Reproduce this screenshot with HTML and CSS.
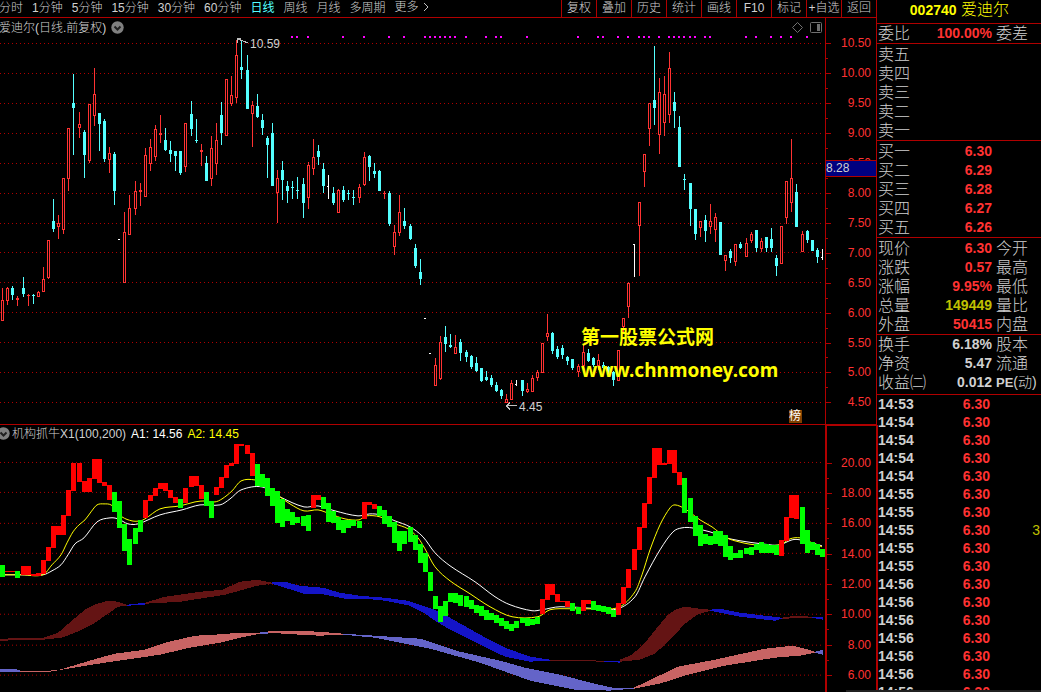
FILE: index.html
```html
<!DOCTYPE html>
<html lang="zh-CN">
<head>
<meta charset="utf-8">
<title>爱迪尔 002740</title>
<link rel="stylesheet" href="styles.css">
</head>
<body>
<div class="app">
  <main class="main">
    <nav class="toolbar">
      <div class="periods">
        <button>分时</button><button>1分钟</button><button>5分钟</button><button>15分钟</button><button>30分钟</button><button>60分钟</button><button class="active">日线</button><button>周线</button><button>月线</button><button>多周期</button><button class="more">更多<svg class="chevron" width="6" height="10" viewBox="0 0 6 10"><path d="M1 1L5 5L1 9"/></svg></button>
      </div>
      <div class="actions">
        <button>复权</button><button>叠加</button><button>历史</button><button>统计</button><button>画线</button><button>F10</button><button>标记</button><button>+自选</button><button>返回</button>
      </div>
    </nav>

    <section class="panel panel-price">
      <div class="plot">
        <header class="plot-head">
          <span class="name">爱迪尔(日线.前复权)</span>
          <svg class="drop" width="13" height="13" viewBox="0 0 13 13"><circle cx="6.5" cy="6.5" r="6.2"/><path d="M3.5 5.5L6.5 8.5L9.5 5.5"/></svg>
          <svg class="tools" width="32" height="13" viewBox="0 0 32 13"><path d="M6.5 1.5L11.5 6.5L6.5 11.5L1.5 6.5Z"/><rect x="19.500" y="1.500" width="11" height="10" rx="1"/><rect class="solid" x="26" y="3" width="3" height="7"/></svg>
        </header>
        <svg class="canvas" id="price" viewBox="0 35 825 389" preserveAspectRatio="none"></svg>
        <div class="watermark"><p>第一股票公式网</p><p class="url">www.chnmoney.com</p></div>
        <span class="badge">榜</span>
      </div>
      <div class="axis">
        <ol class="scale"><li>10.50</li><li>10.00</li><li>9.50</li><li>9.00</li><li>8.50</li><li>8.00</li><li>7.50</li><li>7.00</li><li>6.50</li><li>6.00</li><li>5.50</li><li>5.00</li><li>4.50</li></ol>
        <span class="cursor">8.28</span>
      </div>
    </section>

    <section class="panel panel-ind">
      <div class="plot">
        <header class="plot-head">
          <svg class="drop drop-first" width="13" height="13" viewBox="0 0 13 13"><circle cx="6.5" cy="6.5" r="6.2"/><path d="M3.5 5.5L6.5 8.5L9.5 5.5"/></svg>
          <span>机构抓牛X1(100,200)</span><span class="a1">A1: 14.56</span><span class="a2">A2: 14.45</span>
        </header>
        <svg class="canvas" id="ind" viewBox="0 442 825 250" preserveAspectRatio="none"></svg>
      </div>
      <div class="axis">
        <ol class="scale"><li>20.00</li><li>18.00</li><li>16.00</li><li>14.00</li><li>12.00</li><li>10.00</li><li>8.00</li><li>6.00</li></ol>
      </div>
    </section>
  </main>

  <aside class="side">
    <h1><b>002740</b> 爱迪尔</h1>
    <table class="quote tight"><tr><th>委比</th><td class="up">100.00%</td><th>委差</th></tr></table>
    <table class="quote">
      <tr><th>卖五</th><td></td><th></th></tr><tr><th>卖四</th><td></td><th></th></tr><tr><th>卖三</th><td></td><th></th></tr><tr><th>卖二</th><td></td><th></th></tr><tr><th>卖一</th><td></td><th></th></tr>
    </table>
    <table class="quote">
      <tr><th>买一</th><td class="up">6.30</td><th></th></tr><tr><th>买二</th><td class="up">6.29</td><th></th></tr><tr><th>买三</th><td class="up">6.28</td><th></th></tr><tr><th>买四</th><td class="up">6.27</td><th></th></tr><tr><th>买五</th><td class="up">6.26</td><th></th></tr>
    </table>
    <table class="quote">
      <tr><th>现价</th><td class="up">6.30</td><th>今开</th></tr><tr><th>涨跌</th><td class="up">0.57</td><th>最高</th></tr><tr><th>涨幅</th><td class="up">9.95%</td><th>最低</th></tr><tr><th>总量</th><td class="vol">149449</td><th>量比</th></tr><tr><th>外盘</th><td class="up">50415</td><th>内盘</th></tr>
    </table>
    <table class="quote loose">
      <tr><th>换手</th><td>6.18%</td><th>股本</th></tr><tr><th>净资</th><td>5.47</td><th>流通</th></tr><tr><th>收益㈡</th><td>0.012</td><th class="pe"><b>PE</b>(动)</th></tr>
    </table>
    <table class="ticks" id="ticks"></table>
  </aside>
  <div class="edge"></div>
</div>
<script src="chart.js"></script>
</body>
</html>
```
FILE: styles.css
```css
* { box-sizing: border-box; }
body {
  margin: 0;
  background: #000;
  color: #d0d0d0;
  font: 300 12px/16px "Liberation Sans", "Noto Sans CJK SC", sans-serif;
}
button {
  padding: 0;
  border: 0;
  background: none;
  color: inherit;
  font: inherit;
  white-space: nowrap;
}
.app {
  position: relative;
  display: flex;
  height: 100vh;
  overflow: hidden;
}
.main {
  flex: 1;
  min-width: 0;
  display: flex;
  flex-direction: column;
}
.toolbar {
  display: flex;
  justify-content: space-between;
  height: 18px;
  border-bottom: 1px solid #b00000;
}
.periods { display: flex; gap: 9px; height: 14px; margin-left: -1px; }
.periods .active { color: #54ffff; font-weight: 400; }
.more { display: flex; align-items: center; gap: 4px; }
.chevron { fill: none; stroke: #c0c0c0; }
.actions { display: flex; }
.actions button { width: 35px; padding-bottom: 3px; border-left: 1px solid #b00000; }

.panel { display: flex; min-height: 0; }
.panel-price { flex: 407 1 0; border-bottom: 1px solid #b00000; }
.panel-ind { flex: 267 1 0; }
.plot {
  position: relative;
  flex: 1;
  min-width: 0;
  display: flex;
  flex-direction: column;
}
.plot-head {
  display: flex;
  align-items: center;
  gap: 5px;
  height: 17px;
  white-space: nowrap;
}
.panel-price .plot-head { padding-top: 2px; }
.name { margin-left: -1px; }
.drop circle { fill: #808080; }
.drop path { fill: none; stroke: #202020; stroke-width: 2; }
.drop-first { margin-left: -3px; margin-right: -3px; }
.tools { margin-left: auto; margin-right: 2px; fill: none; stroke: #707070; }
.tools .solid { fill: #707070; stroke: none; }
.a1 { color: #fff; }
.a2 { color: #ff0; }
.canvas {
  display: block;
  flex: 1;
  width: 100%;
  min-height: 0;
  shape-rendering: crispEdges;
}
.canvas text { fill: #d0d0d0; font-size: 12px; }
.grid { stroke: #b00000; stroke-dasharray: 1 3; }
.up-line { fill: #ff3232; }
.up-body { fill: #000; stroke: #ff3232; }
.down { fill: #54ffff; }
.flat { fill: #fff; }
.signal { fill: #f0f; }
.pointer { fill: none; stroke: #c0c0c0; }
.bull { fill: #f00; }
.bear { fill: #0f0; }
.line-a1 { fill: none; stroke: #fff; }
.line-a2 { fill: none; stroke: #ff0; }
.maroon { fill: #641414; }
.blue { fill: #1414c8; }
.pink { fill: #c86464; }
.lilac { fill: #6464c8; }

.watermark {
  position: absolute;
  left: 581px;
  top: 303px;
  color: #ff0;
  font: 700 19px/30px "Noto Sans CJK SC", sans-serif;
}
.watermark p { margin: 0; }
.watermark .url { font: 700 19px/38px "Noto Sans", sans-serif; }
.badge {
  position: absolute;
  right: 23px;
  bottom: 1px;
  width: 13px;
  height: 13px;
  background: #804000;
  color: #fff;
  font-weight: 400;
  line-height: 13px;
}
.axis {
  position: relative;
  width: 51px;
  border-left: 1px solid #b00000;
  color: #ff3232;
}
.panel-ind .axis { border: 2px solid #b00000; border-top-width: 1px; border-bottom: 0; width: 53px; margin-right: -2px; z-index: 1; }
.scale {
  display: grid;
  grid-auto-rows: 1fr;
  height: 100%;
  margin: 0;
  padding: 10px 0 7px;
  list-style: none;
  text-align: right;
}
.panel-ind .scale { padding: 21px 0 2px; }
.scale li {
  position: relative;
  display: flex;
  align-items: center;
  justify-content: flex-end;
  padding-right: 5px;
}
.scale li::before, .scale li::after {
  content: "";
  position: absolute;
  left: 0;
  top: 50%;
  width: 5px;
  height: 1px;
  background: #b00000;
}
.scale li::after { top: 100%; width: 2px; }
.scale li:last-child::after { display: none; }
.cursor {
  position: absolute;
  left: 0;
  right: 0;
  top: 142px;
  height: 17px;
  border: solid #b00000;
  border-width: 1px 0;
  background: #000080;
  color: #d0d0d0;
  line-height: 14px;
}

.side {
  width: 165px;
  border-left: 1px solid #b00000;
  overflow: hidden;
}
.side h1 {
  height: 24px;
  margin: 0;
  padding-right: 32px;
  border-bottom: 1px solid #b00000;
  color: #ff0;
  font-size: 16px;
  font-weight: 300;
  line-height: 20px;
  text-align: right;
}
.side b { font-size: 14px; font-weight: 700; }
.quote {
  width: 100%;
  table-layout: fixed;
  border-spacing: 0;
  border-collapse: separate;
  padding: 1px 0 0;
  border-bottom: 1px solid #b00000;
}
.quote.tight { padding: 0; }
.quote.loose { padding: 0 0 2px; }
.quote th, .quote td, .ticks td { height: 19px; padding: 0; white-space: nowrap; }
.quote th {
  width: 49px;
  padding-left: 1px;
  font-size: 16px;
  font-weight: 300;
  line-height: 19px;
  text-align: left;
}
.quote th:last-child { padding-left: 4px; }
.quote .pe { font-size: 14px; }
.quote .pe b { font-size: 13px; }
.quote td { width: 66px; text-align: right; font: 700 14px/19px "Liberation Sans", sans-serif; }
.up { color: #ff3232; }
.vol { color: #c0c000; }
.ticks { width: 100%; table-layout: fixed; border-spacing: 0; }
.ticks td { height: 18px; padding-left: 1px; font: 700 14px/18px "Liberation Sans", sans-serif; }
.ticks .up { text-align: right; width: 60px; }
.ticks .time { width: 53px; }
.ticks .lot { color: #c0c000; font-weight: 400; text-align: right; padding-right: 1px; }
.edge {
  position: absolute;
  right: 0;
  bottom: 0;
  width: 195px;
  height: 2px;
  background: #202020;
  z-index: 2;
}
```
FILE: chart.js
```js
// Each candle: kind (r rising, c falling, w flat), high, open/close top, open/close bottom, low.
const candles = `r288,300,321,321 r287,288,301,305 c286,288,295,300 r296,298,300,306 c277,288,294,297 r294,295,296,306 c294,295,296,304 r291,292,297,297 r267,279,292,292 r240,240,278,279
c199,221,229,232 r215,223,227,239 r178,178,230,234 r128,128,179,191 c74,103,108,155 r112,124,128,138 c130,132,155,178 r104,104,161,163 r68,94,116,126 c113,113,124,151
c119,121,159,162 r147,153,160,173 c152,154,191,205 w239,239,240,240 r212,232,283,283 r195,208,235,235 r181,191,209,215 r183,190,192,206 r148,155,197,197 r139,147,164,171
r125,129,157,161 r115,133,135,143 c128,140,150,151 c141,150,154,162 c151,151,156,171 c151,151,173,175 r123,123,167,172 c101,114,129,136 c119,140,141,143 r144,150,152,166
c156,163,181,181 r136,148,179,186 r123,140,164,175 c102,115,133,145 r79,79,136,136 r76,95,104,106 r40,55,98,103 c41,67,70,79 c55,70,109,109 r101,105,114,147
c94,106,117,118 c114,120,128,135 c136,138,145,178 c123,133,186,186 r170,178,193,223 c161,170,180,200 c181,186,191,203 c181,187,188,199 c177,190,191,199 c178,184,203,218
r162,165,198,209 r139,157,169,175 c145,151,157,165 c163,169,186,193 w175,186,187,199 c187,193,203,205 r189,190,213,213 c186,190,200,202 c190,193,194,200 c190,197,198,205
r184,187,198,203 r152,157,185,186 c155,156,167,181 c163,171,174,178 c170,171,191,191 r191,193,194,199 c191,193,224,226 r225,232,247,255 r195,212,233,236 c208,221,226,229
c224,226,239,240 c244,248,266,268 c259,272,279,285 w318,318,319,319 w353,353,354,354 r358,365,386,386 r336,342,379,380 c326,337,344,352 c334,345,347,348 r335,347,354,354
c339,342,353,361 c350,352,357,362 c355,356,367,369 c357,363,371,372 c368,368,381,382 c371,377,380,381 c375,378,385,387 c382,385,391,392 c389,390,396,399 r394,399,403,403
r380,383,400,400 w380,384,385,386 c380,380,391,396 r383,389,392,393 r375,378,392,392 r370,372,378,381 r343,343,373,373 r314,333,337,341 c332,333,351,354 c346,349,357,359
c345,348,355,359 c356,357,361,365 c359,359,368,370 r364,366,372,377 r345,352,366,367 c349,353,361,362 c357,358,365,367 r354,360,366,370 c362,365,368,369 c366,367,373,374
c371,372,380,386 r350,350,381,381 r318,318,327,334 r282,283,307,318 w244,244,245,277 r202,202,226,276 r154,154,172,187 r103,103,129,146 c46,100,108,125 r78,92,135,154
r76,94,123,136 r52,68,115,123 c92,102,111,128 c116,127,167,167 c174,179,180,190 c183,183,209,226 c209,209,234,240 r221,221,228,237 c215,220,231,242 r204,221,227,234
r213,217,230,242 c222,222,255,255 r255,255,261,271 c249,251,258,263 r244,244,262,266 c242,244,248,249 r238,243,257,257 r232,234,241,243 c230,230,248,252 r238,241,249,252
c237,237,248,252 c228,239,248,252 c255,258,266,276 r226,226,264,264 r181,181,218,224 r139,178,203,212 c184,192,227,227 r231,234,252,252 c230,231,240,243 c240,240,251,251
c248,250,257,263 w249,257,258,260`.split(/\s+/);

// Indicator bars: colour (r/g), top, bottom.
const bars = `g565,577 r571,572 r571,572 g571,578 r566,575 r566,575 r574,576 r573,576 r560,574 r547,561
r526,548 r526,535 r515,535 r490,516 r463,491 r463,482 r481,492 r478,492 r459,479 r459,483
r482,486 r485,500 g492,512 g501,528 g524,551 g539,565 g528,544 g520,532 r500,518 r495,501
r488,496 r483,489 r483,491 r490,498 r497,503 g499,508 r488,503 r476,487 r476,486 r485,499
g492,506 g501,518 r487,495 r477,488 r465,478 r463,466 r444,464 r444,446 r445,454 r453,476
g464,486 g474,487 g478,496 g488,506 g491,523 g499,527 g509,521 g512,525 g517,523 g516,526
g515,531 r495,508 r495,500 g497,509 g503,522 g511,523 g517,530 g520,533 g520,528 g520,526
g521,528 r502,519 r502,505 r504,509 g506,516 g510,524 g516,527 g522,543 g531,551 g531,544
g527,542 g535,550 g544,563 g553,572 g572,591 g596,609 g606,622 g601,616 g593,602 g593,603
g595,606 g596,607 g600,609 g605,613 g606,616 g610,620 g613,620 g615,623 g618,626 g621,629
g624,631 g621,628 g618,623 g618,626 g619,625 g617,624 r599,614 r584,600 r584,595 r594,602
r601,602 r601,607 g603,611 g607,614 r600,611 r600,604 g601,610 g605,611 g606,612 g607,614
g610,617 r603,615 r587,604 r569,588 r549,570 r527,550 r503,528 r477,504 r448,478 r448,465
r463,465 r450,464 r450,473 r472,485 g478,513 g498,522 g516,536 g525,546 g534,544 g536,545
g531,544 g531,546 g535,557 g546,560 g553,558 g550,558 g548,554 g547,555 g544,550 g542,553
g544,553 g545,553 g545,555 r540,556 r517,541 r495,518 r495,519 g507,544 g530,553 g542,550
g544,555 g549,557`.split(/\s+/);

const signals = [292,297,308,343,364,389,404,425,430,435,440,445,450,455,466,486,496,501,527,578,598,603,618,628,639,644,649,659,669,674,679,684,690,695,705,710,746,756,771,781,791,807];

const a2 = "0,575 22,575 43,575 52,565 61,555 67,543 73,532 79,525 85,520 91,512 97,505 104,504 111,505 117,511 122,517 132,521 140,521 145,519 160,509 180,506 195,502 205,501 215,502 222,499 232,491 241,481 255,480 262,484 280,497 290,504 304,511 318,510 330,514 345,519 359,520 366,516 380,517 395,524 408,529 418,538 425,549 435,567 450,581 470,594 490,607 512,617 538,617 550,610 570,609 600,609 620,607 635,592 642,575 650,550 660,525 670,508 675,505 685,509 700,520 712,527 725,537 735,541 755,545 780,545 790,539 800,538 810,542 822,547";
const a1 = "0,575 22,575 43,575 52,571 61,565 68,555 75,544 84,538 97,522 110,518 118,519 128,524 138,524 160,515 182,510 200,505 220,505 230,499 241,490 262,487 280,497 304,507 318,506 335,511 358,516 370,514 380,515 395,521 410,527 423,537 435,553 450,566 475,582 495,597 510,605 532,611 542,610 560,607 600,609 618,609 635,597 645,577 660,550 673,532 682,528 692,528 710,532 730,539 770,545 780,545 792,540 800,540 822,546";

const ribbons = [
  ["maroon", "0,639 43,638 58,633 73,620 85,610 97,604 108,601 118,602 127,605 127,606 118,607 105,616 92,625 80,631 62,638 43,640 0,641"],
  ["blue", "127,605 145,603 145,605 127,606"],
  ["maroon", "145,603 165,597 200,592 222,590 240,582 257,580 272,583 272,584 257,586 225,595 180,602 145,604"],
  ["blue", "272,582 285,582 300,586 323,588 340,593 360,596 385,598 408,601 435,610 450,618 480,635 505,648 530,657 550,660 550,661 530,662 505,657 480,645 450,630 435,621 425,614 410,606 385,601 365,599 345,599 320,594 304,594 285,588 272,584"],
  ["maroon", "550,660 604,661 604,662 550,661"],
  ["blue", "604,661 620,661 620,663 604,662"],
  ["maroon", "620,660 632,655 645,643 657,628 667,616 675,610 685,607 700,609 710,610 710,611 697,615 685,624 670,640 655,654 640,660 620,662"],
  ["blue", "710,610 720,609 740,613 765,616 782,618 782,619 775,621 740,617 725,614 710,611"],
  ["maroon", "782,618 795,616 812,617 812,618 782,619"],
  ["blue", "812,617 823,617 823,620 812,618"],
  ["lilac", "0,669 20,670 20,672 0,672"],
  ["pink", "20,671 50,671 60,670 80,664 100,658 115,654 145,650 165,643 195,636 215,635 240,633 260,633 260,634 240,638 220,643 190,648 160,655 140,658 105,663 80,667 50,672 20,672"],
  ["lilac", "260,632 268,632 268,634 260,634"],
  ["pink", "268,631 290,631 320,632 343,634 343,635 320,636 300,635 268,633"],
  ["lilac", "343,634 375,636 420,639 445,647 460,652 500,661 525,668 560,675 590,683 612,688 634,688 634,689 610,691 575,690 530,681 505,672 480,663 455,656 430,649 400,643 375,638 343,635"],
  ["pink", "634,688 655,678 678,667 715,660 765,649 793,646 805,649 815,652 815,653 800,656 775,658 725,666 688,675 660,684 634,689"],
  ["lilac", "815,652 823,650 823,655 815,653"]
];

const slotX = i => 2 + 5 * i + Math.floor((i + 7) / 10.87);
const rect = (cls, x, y, w, h) => `<rect class="${cls}" x="${x}" y="${y}" width="${w}" height="${h}"/>`;
const gridRow = y => `<line class="grid" x1="0" x2="823" y1="${y + 0.5}" y2="${y + 0.5}"/>`;
const parse = s => [s[0], ...s.slice(1).split(",").map(Number)];

// Smooth curve through a list of points (Catmull-Rom as cubic Beziers).
function curve(list) {
  const p = list.split(" ").map(s => s.split(",").map(Number));
  let d = `M${p[0]}`;
  for (let i = 0; i < p.length - 1; i++) {
    const a = p[i - 1] || p[i], b = p[i], c = p[i + 1], e = p[i + 2] || c;
    const dx = (c[0] - b[0]) / 3;
    const slope = (m, n) => (n[1] - m[1]) / ((n[0] - m[0]) || 1);
    d += `C${b[0] + dx} ${b[1] + slope(a, c) * dx} ${c[0] - dx} ${c[1] - slope(b, e) * dx} ${c[0]} ${c[1]}`;
  }
  return d;
}

let price = [43,73,103,133,163,193,223,252,282,312,342,372,402].map(gridRow).join("");
candles.forEach((c, i) => {
  const [kind, high, top, bottom, low] = parse(c);
  const x = slotX(i);
  if (kind === "r") {
    price += rect("up-line", x, high, 1, low - high);
    price += bottom - top > 2
      ? rect("up-body", x - 0.5, top + 0.5, 2, bottom - top - 1)
      : rect("up-line", x - 1, top, 3, bottom - top);
  } else {
    const cls = kind === "c" ? "down" : "flat";
    price += rect(cls, x, high, 1, low - high);
    price += rect(cls, x - 1, top, kind === "c" ? 3 : 2, bottom - top);
  }
});
price += signals.map(x => rect("signal", x - 1, 36, 2, 2)).join("");
price += `<path class="pointer" d="M241 38.5H237.500V43M238 39L248 43"/><text x="250" y="48">10.59</text>`;
price += `<path class="pointer" d="M517 405.500H507M510 402L506.500 405.500L510 409"/><text x="519" y="411">4.45</text>`;
document.getElementById("price").innerHTML = price;

let ind = [462,492,523,553,584,614,645,675].map(gridRow).join("");
ind += ribbons.map(([cls, pts]) => `<polygon class="${cls}" points="${pts}"/>`).join("");
ind += `<path class="line-a1" d="${curve(a1)}"/><path class="line-a2" d="${curve(a2)}"/>`;
bars.forEach((b, i) => {
  const [kind, top, bottom] = parse(b);
  const x = slotX(i) - 2;
  ind += rect(kind === "r" ? "bull" : "bear", x, top, 5, bottom - top);
});
document.getElementById("ind").innerHTML = ind;

const times = [..."34444555556666666"].map(d => "14:5" + d);
document.getElementById("ticks").innerHTML = times
  .map((t, i) => `<tr><td class="time">${t}</td><td class="up">6.30</td><td class="lot">${i === 7 ? "3" : ""}</td></tr>`)
  .join("");
```
